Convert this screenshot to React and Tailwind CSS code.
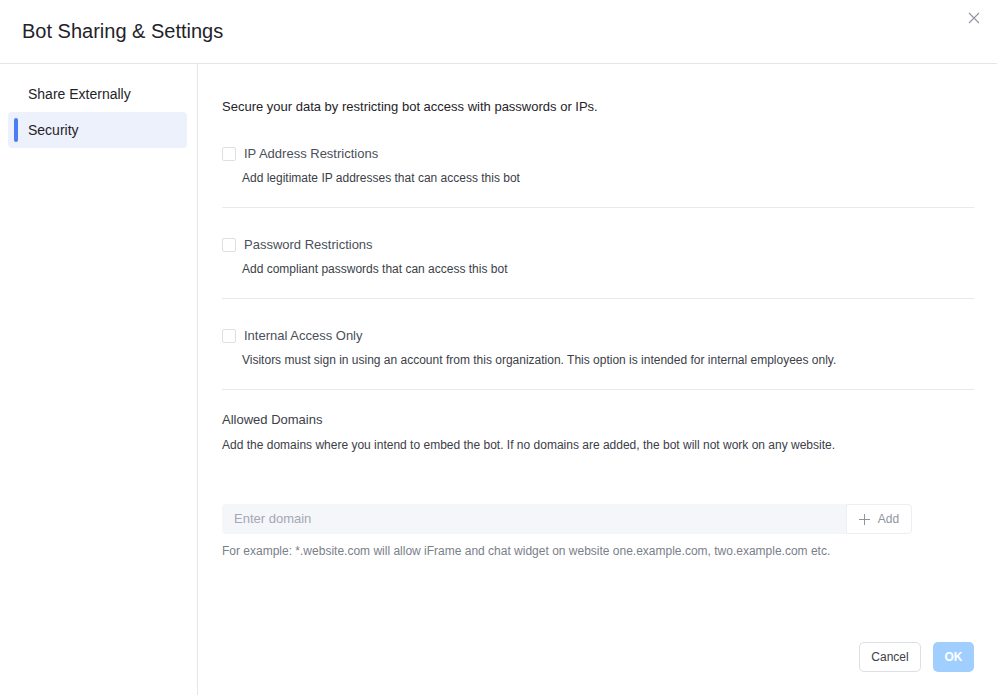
import React from "react";

function Checkbox() {
  return <span className="inline-block w-[14px] h-[14px] border border-[#dcdfe6] rounded-[2px] bg-white shrink-0" />;
}

function Option({ title, desc }) {
  return (
    <div className="pt-[28px] pb-[20px] border-b border-[#e8e9eb]">
      <div className="flex items-center h-[18px]">
        <Checkbox />
        <span className="ml-[8px] text-[13px] text-[#4a4f59]">{title}</span>
      </div>
      <div className="ml-[20px] mt-[6px] text-[12px] text-[#3c4048] leading-[18px]">{desc}</div>
    </div>
  );
}

export default function App() {
  return (
    <div className="w-[997px] h-[695px] bg-white flex flex-col relative overflow-hidden" style={{ fontFamily: '"Liberation Sans", Arial, sans-serif' }}>
      <div className="h-[64px] flex items-center px-[22px] border-b border-[#e5e6eb] shrink-0">
        <h1 className="text-[20px] text-[#1f2329] leading-none -mt-[2px]">Bot Sharing &amp; Settings</h1>
      </div>
      <button className="absolute right-[16px] top-[11px] w-[14px] h-[14px] text-[#8f959e]">
        <svg viewBox="0 0 14 14" width="14" height="14" fill="none" stroke="currentColor" strokeWidth="1.1">
          <path d="M2 2 L12 12 M12 2 L2 12" />
        </svg>
      </button>
      <div className="flex flex-1 min-h-0">
        <div className="w-[198px] border-r border-[#e5e6eb] shrink-0 pl-[8px] pr-[10px] pt-[12px]">
          <div className="h-[36px] flex items-center pl-[20px] text-[14px] text-[#1f2329]">Share Externally</div>
          <div className="h-[36px] flex items-center pl-[20px] text-[14px] text-[#1f2329] bg-[#edf1fb] rounded-[4px] relative">
            <span className="absolute left-[6px] top-[6px] bottom-[6px] w-[4px] rounded-full bg-[#4c7cf2]" />
            Security
          </div>
        </div>
        <div className="flex-1 pl-[24px] pr-[23px] pt-[34px] flex flex-col">
          <div className="text-[13px] text-[#1f2329] leading-[18px]">Secure your data by restricting bot access with passwords or IPs.</div>
          <div className="mt-[1px]">
            <Option title="IP Address Restrictions" desc="Add legitimate IP addresses that can access this bot" />
            <Option title="Password Restrictions" desc="Add compliant passwords that can access this bot" />
            <Option title="Internal Access Only" desc="Visitors must sign in using an account from this organization. This option is intended for internal employees only." />
          </div>
          <div className="mt-[21px] text-[13px] text-[#3c4048] leading-[18px]">Allowed Domains</div>
          <div className="mt-[7px] text-[12px] text-[#3c4048] leading-[18px]">Add the domains where you intend to embed the bot. If no domains are added, the bot will not work on any website.</div>
          <div className="mt-[50px] flex h-[30px] w-[690px]">
            <div className="flex-1 bg-[#f5f6fa] rounded-l-[4px] flex items-center px-[12px] text-[13px] text-[#a3a8b3]">Enter domain</div>
            <div className="w-[66px] border border-[#eceef2] rounded-r-[4px] flex items-center justify-center gap-[8px] text-[12px] text-[#8f959e] bg-white">
              <svg width="11" height="11" viewBox="0 0 11 11" stroke="currentColor" strokeWidth="1"><path d="M5.5 0 V11 M0 5.5 H11" /></svg>
              Add
            </div>
          </div>
          <div className="mt-[9px] text-[12px] text-[#7a808a] leading-[16px]">For example: *.website.com will allow iFrame and chat widget on website one.example.com, two.example.com etc.</div>
          <div className="mt-auto mb-[23px] flex justify-end gap-[12px]">
            <div className="h-[30px] w-[62px] border border-[#dcdfe6] rounded-[5px] flex items-center justify-center text-[12px] text-[#3c4048]">Cancel</div>
            <div className="h-[30px] w-[41px] rounded-[5px] bg-[#a0cfff] flex items-center justify-center text-[12px] text-white font-bold">OK</div>
          </div>
        </div>
      </div>
    </div>
  );
}
